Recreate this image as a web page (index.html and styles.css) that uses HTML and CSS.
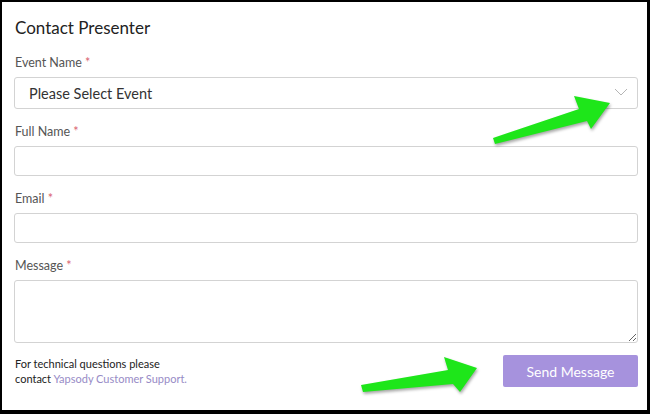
FILE: index.html
```html
<!DOCTYPE html>
<html>
<head>
<meta charset="utf-8">
<link rel="stylesheet" href="styles.css">
</head>
<body>
<div class="frame">
  <h1 class="title">Contact Presenter</h1>
  <form class="form">
    <div class="field">
      <label class="label">Event Name <span class="req">*</span></label>
      <div class="select">
        <span>Please Select Event</span>
        <svg class="chev" width="14" height="8" viewBox="0 0 14 8"><path d="M1 1 L7 7 L13 1" fill="none" stroke="#b5b5b5" stroke-width="1"/></svg>
      </div>
    </div>
    <div class="field">
      <label class="label">Full Name <span class="req">*</span></label>
      <input class="input" type="text">
    </div>
    <div class="field">
      <label class="label">Email <span class="req">*</span></label>
      <input class="input" type="text">
    </div>
    <div class="field">
      <label class="label">Message <span class="req">*</span></label>
      <textarea class="textarea"></textarea>
    </div>
    <div class="footer">
      <p class="note">For technical questions please<br>contact <a class="link">Yapsody Customer Support.</a></p>
      <button type="button" class="btn">Send Message</button>
    </div>
  </form>
  <svg class="arrows" width="650" height="414" viewBox="0 0 650 414">
    <polygon points="493,138 579,109 574,96 610,103 591,129 587,121 495,144" fill="#1ee61a"/>
    <polygon points="361,385 448,370 444,357 477,368 460,392 453,384 363,392" fill="#1ee61a"/>
  </svg>
</div>
</body>
</html>
```
FILE: styles.css
```css
* { box-sizing: border-box; }
html, body { margin: 0; padding: 0; background: #fff; }
body { font-family: Lato, "Open Sans", sans-serif; }
.frame {
  position: relative;
  width: 650px;
  height: 414px;
  border-style: solid;
  border-color: #000;
  border-width: 2px 3px 4px 2px;
  padding: 15px 9px 0 12px;
  background: #fff;
}
.title {
  margin: 0;
  font-size: 17px;
  line-height: 22px;
  font-weight: 400;
  color: #222;
  padding-left: 1px;
}
.form { margin: 0; }
.field { margin-top: 16px; }
.field + .field { margin-top: 15px; }
.label {
  display: block;
  font-size: 12.5px;
  line-height: 16px;
  color: #555;
  padding-left: 1px;
  margin-bottom: 6px;
}
.req { color: #d9636f; }
.select {
  height: 32px;
  border: 1px solid #d3d3d3;
  border-radius: 3px;
  display: flex;
  align-items: center;
  justify-content: space-between;
  padding: 0 9px 0 14px;
  font-size: 14.5px;
  color: #333;
}
.chev { margin-top: -2px; }
.input {
  display: block;
  width: 100%;
  height: 30px;
  border: 1px solid #d3d3d3;
  border-radius: 3px;
  margin: 0;
  padding: 0 8px;
  font-family: inherit;
  outline: none;
}
.textarea {
  display: block;
  width: 100%;
  height: 63px;
  border: 1px solid #d3d3d3;
  border-radius: 3px;
  margin: 0;
  padding: 6px 8px;
  font-family: inherit;
  resize: vertical;
  outline: none;
}
.footer {
  display: flex;
  justify-content: space-between;
  align-items: flex-start;
  margin-top: 12px;
}
.note {
  margin: 1px 0 0 1px;
  font-size: 11px;
  line-height: 15px;
  color: #222;
}
.link { color: #978bc6; text-decoration: none; }
.btn {
  width: 135px;
  height: 32px;
  border: none;
  border-radius: 2px;
  background: #a692dd;
  color: #fff;
  font-family: inherit;
  font-size: 14px;
  padding: 0;
}
.arrows {
  position: absolute;
  left: -2px;
  top: -2px;
  pointer-events: none;
  filter: drop-shadow(1px 2px 1.5px rgba(0,0,0,0.35));
}
```
